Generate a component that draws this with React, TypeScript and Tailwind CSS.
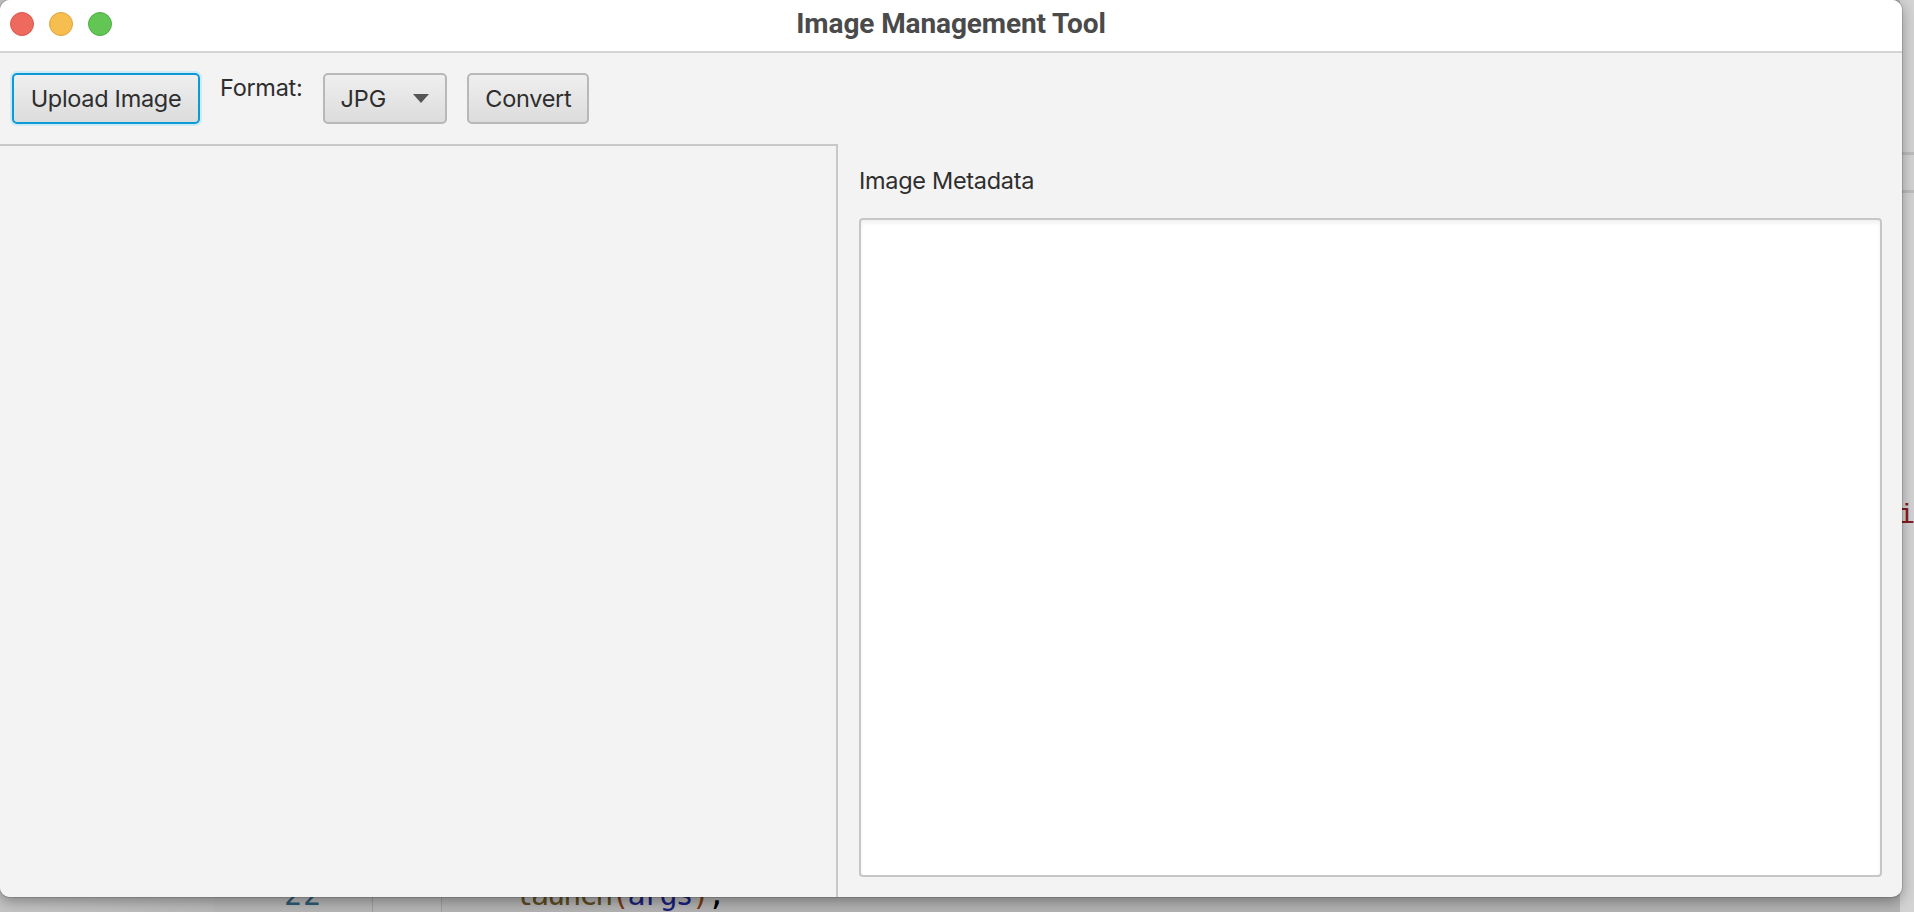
export default function App() {
  return (
    <div className="relative w-[1914px] h-[912px] overflow-hidden bg-[#b3b3b3] font-['Inter','Liberation_Sans',sans-serif]">
      {/* IDE behind the window */}
      <div className="absolute inset-0 flex">
        <div className="w-[214px] h-full bg-gradient-to-r from-[#c4c4c4] to-[#b9b9b9]" />
        <div className="w-[159px] h-full bg-[#b6b6b6] border-r border-[#9e9e9e]" />
        <div className="w-[69px] h-full bg-[#b6b6b6] border-r border-[#9e9e9e]" />
        <div className="flex-1 h-full bg-[#b3b3b3]" />
      </div>
      <div className="absolute left-[284px] top-[880px] text-[30px] leading-none text-[#2b5a73] tracking-[1px] font-['DejaVu_Sans_Mono',monospace]">22</div>
      <div className="absolute left-[515px] top-[880px] text-[30px] leading-none tracking-[-2px] font-['DejaVu_Sans_Mono',monospace]">
        <span className="text-[#5e4a1e]">launch</span>
        <span className="text-[#7a3a10]">(</span>
        <span className="text-[#1a1f7a]">args</span>
        <span className="text-[#7a3a10]">)</span>
        <span className="text-black">;</span>
      </div>
      <div className="absolute right-0 top-0 w-[14px] h-[912px] bg-[#d3d3d3]">
        <div className="mt-[152px] h-[3px] bg-[#bdbdbd]" />
        <div className="mt-[35px] h-[3px] bg-[#bdbdbd]" />
      </div>
      <div className="absolute left-[1898px] top-[502px] text-[28px] leading-none text-[#8a1c1c] font-['Liberation_Mono',monospace]">i</div>

      {/* Window */}
      <div className="absolute left-0 top-0 w-[1902px] h-[897px] flex flex-col bg-[#f3f3f3] rounded-[10px] overflow-hidden shadow-[0_4px_14px_rgba(0,0,0,0.35),0_0_0_1px_rgba(0,0,0,0.12)]">
        {/* Title bar */}
        <div className="relative h-[53px] shrink-0 bg-white border-b-2 border-[#d4d4d4] flex items-center justify-center">
          <div className="absolute left-[10px] top-[12px] flex gap-[15px]">
            <div className="w-[24px] h-[24px] rounded-full bg-[#ee6a5f] border border-[#d9574d]" />
            <div className="w-[24px] h-[24px] rounded-full bg-[#f5be4f] border border-[#dca43c]" />
            <div className="w-[24px] h-[24px] rounded-full bg-[#62c554] border border-[#4fae43]" />
          </div>
          <span className="-mt-[4px] text-[28px] font-bold text-[#4a4a4a] tracking-[-0.1px] font-['Roboto','Inter',sans-serif]">
            Image Management Tool
          </span>
        </div>

        {/* Toolbar */}
        <div className="h-[91px] shrink-0 flex items-center pl-[12px]">
          <button className="h-[51px] w-[188px] rounded-[5px] border-[2.5px] border-[#0a9bd6] shadow-[0_0_0_2px_#cfe9f5] bg-gradient-to-b from-[#efefef] to-[#dcdcdc] text-[23.5px] text-[#2e2e2e] tracking-[-0.3px]">
            Upload Image
          </button>
          <span className="self-start mt-[17px] ml-[20px] text-[23.5px] text-[#2e2e2e] tracking-[-0.3px]">Format:</span>
          <button className="ml-[21px] h-[51px] w-[124px] rounded-[5px] border-2 border-[#b8b8b8] bg-gradient-to-b from-[#efefef] to-[#dcdcdc] flex items-center pl-[15px] pr-[16px] justify-between text-[23.5px] text-[#2e2e2e]">
            <span>JPG</span>
            <svg width="16" height="9" viewBox="0 0 16 9">
              <path d="M0 0 L16 0 L8 9 Z" fill="#555" />
            </svg>
          </button>
          <button className="ml-[20px] h-[51px] w-[122px] rounded-[5px] border-2 border-[#b8b8b8] bg-gradient-to-b from-[#efefef] to-[#dcdcdc] text-[23.5px] text-[#2e2e2e] tracking-[-0.3px]">
            Convert
          </button>
        </div>

        {/* Content */}
        <div className="flex-1 flex min-h-0">
          <div className="w-[838px] border-t-2 border-r-2 border-[#c8c8c8] bg-[#f3f3f3]" />
          <div className="flex-1 flex flex-col pl-[21px] pr-[20px] pt-[22px] pb-[20px]">
            <span className="text-[23.5px] leading-[30px] text-[#2e2e2e] tracking-[-0.3px]">Image Metadata</span>
            <div className="mt-[22px] flex-1 bg-white rounded-[4px] border-2 border-[#c6c6c6] shadow-[inset_0_3px_4px_rgba(0,0,0,0.06)]" />
          </div>
        </div>
      </div>
    </div>
  );
}
